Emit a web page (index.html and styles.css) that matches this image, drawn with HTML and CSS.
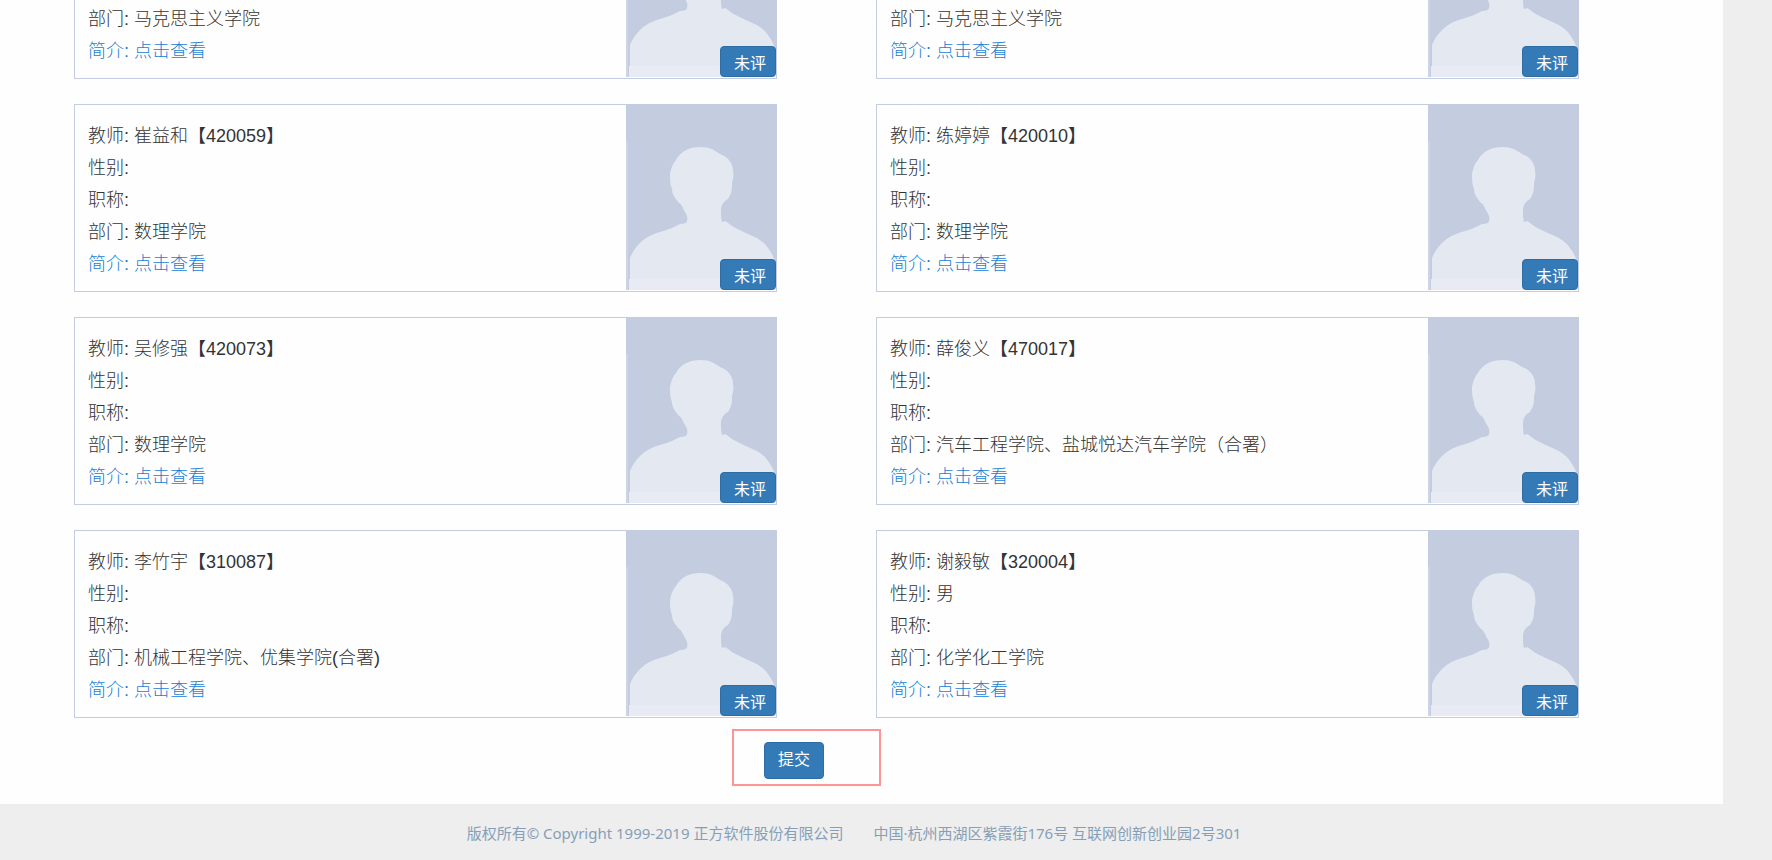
FILE: index.html
```html
<!DOCTYPE html>
<html lang="zh-CN">
<head>
<meta charset="utf-8">
<title>教师评价</title>
<link rel="stylesheet" href="styles.css">
</head>
<body>
<svg class="defs" aria-hidden="true">
  <symbol id="avatar" viewBox="0 0 150 185" preserveAspectRatio="none">
    <rect width="150" height="185" fill="#c4cce0"/>
    <path d="M0 36H2V185H0Z" fill="#cdd5e5"/>
    <path d="M4 185V153C6 148 9 143 14 138C20 132 27 129 34 127C42 125 48 122 54 119C58 119 61 118 61 116C62 113 61 110 59 107C57 104 56 99 53 98C50 94 46 90 46 84C44 79 44 75 44 69C45 63 47 58 50 55C55 46 63 42 75 42C84 42 88 45 94 49C102 52 107 58 107 66C108 71 107 74 106 78C106 84 106 88 102 94C98 96 95 100 95 105C95 110 95 114 96 117C99 116 100 116 102 118C108 123 116 126 122 129C132 133 138 137 142 143C145 147 148 152 149 157V185Z" fill="#e4e8f1"/>
    <path d="M3 174H150V185H3Z" fill="#e8ebf4"/>
  </symbol>
</svg>
<main class="page">
  <div class="cards">
    <article class="card">
      <div class="info"><p>部门: 马克思主义学院</p><a href="#">简介: 点击查看</a></div>
      <div class="photo"><svg class="avatar"><use href="#avatar"/></svg><button class="badge" type="button">未评</button></div>
    </article>
    <article class="card">
      <div class="info"><p>部门: 马克思主义学院</p><a href="#">简介: 点击查看</a></div>
      <div class="photo"><svg class="avatar"><use href="#avatar"/></svg><button class="badge" type="button">未评</button></div>
    </article>
    <article class="card">
      <div class="info"><p>教师: 崔益和<span class="code">【420059】</span></p><p>性别:</p><p>职称:</p><p>部门: 数理学院</p><a href="#">简介: 点击查看</a></div>
      <div class="photo"><svg class="avatar"><use href="#avatar"/></svg><button class="badge" type="button">未评</button></div>
    </article>
    <article class="card">
      <div class="info"><p>教师: 练婷婷<span class="code">【420010】</span></p><p>性别:</p><p>职称:</p><p>部门: 数理学院</p><a href="#">简介: 点击查看</a></div>
      <div class="photo"><svg class="avatar"><use href="#avatar"/></svg><button class="badge" type="button">未评</button></div>
    </article>
    <article class="card">
      <div class="info"><p>教师: 吴修强<span class="code">【420073】</span></p><p>性别:</p><p>职称:</p><p>部门: 数理学院</p><a href="#">简介: 点击查看</a></div>
      <div class="photo"><svg class="avatar"><use href="#avatar"/></svg><button class="badge" type="button">未评</button></div>
    </article>
    <article class="card">
      <div class="info"><p>教师: 薛俊义<span class="code">【470017】</span></p><p>性别:</p><p>职称:</p><p>部门: 汽车工程学院、盐城悦达汽车学院（合署）</p><a href="#">简介: 点击查看</a></div>
      <div class="photo"><svg class="avatar"><use href="#avatar"/></svg><button class="badge" type="button">未评</button></div>
    </article>
    <article class="card">
      <div class="info"><p>教师: 李竹宇<span class="code">【310087】</span></p><p>性别:</p><p>职称:</p><p>部门: 机械工程学院、优集学院(合署)</p><a href="#">简介: 点击查看</a></div>
      <div class="photo"><svg class="avatar"><use href="#avatar"/></svg><button class="badge" type="button">未评</button></div>
    </article>
    <article class="card">
      <div class="info"><p>教师: 谢毅敏<span class="code">【320004】</span></p><p>性别: 男</p><p>职称:</p><p>部门: 化学化工学院</p><a href="#">简介: 点击查看</a></div>
      <div class="photo"><svg class="avatar"><use href="#avatar"/></svg><button class="badge" type="button">未评</button></div>
    </article>
  </div>
  <div class="actions">
    <div class="highlight"><button class="submit" type="button">提交</button></div>
  </div>
</main>
<footer class="footer">
  <span>版权所有© Copyright 1999-2019 正方软件股份有限公司</span>
  <span>中国·杭州西湖区紫霞街176号 互联网创新创业园2号301</span>
</footer>
</body>
</html>
```
FILE: styles.css
```css
* {
  box-sizing: border-box;
}

/* The list is anchored to its end, so the first row runs off the top. */
body {
  display: flex;
  flex-direction: column;
  justify-content: flex-end;
  height: 100vh;
  margin: 0;
  overflow: hidden;
  background: #eee;
  color: #333;
  font-family: "Liberation Sans", "Noto Sans CJK SC", sans-serif;
}

.defs {
  position: absolute;
  width: 0;
  height: 0;
}

.page {
  flex: none;
  margin-right: 49px;
  padding: 0 144px 18px 74px;
  background: #fefefe;
}

.cards {
  display: grid;
  grid-template-columns: 1fr 1fr;
  gap: 25px 99px;
}

.card {
  display: flex;
  min-height: 188px;
  border: 1px solid #c4cce0;
}

.info {
  display: flex;
  flex: 1;
  flex-direction: column;
  justify-content: flex-end;
  align-items: flex-start;
  padding: 15px 13px 11px;
  font-size: 18px;
  font-weight: 300;
  line-height: 32px;
}

.info p {
  margin: 0;
}

.info a {
  color: #1a7fd4;
  text-decoration: none;
}

.code {
  font-weight: 400;
}

.photo {
  position: relative;
  width: 150px;
  padding-bottom: 1px;
}

.avatar {
  display: block;
  width: 100%;
  height: 100%;
}

.badge,
.submit {
  border: 1px solid #2e6da4;
  border-radius: 4px;
  background: #337ab7;
  color: #fff;
  font-family: inherit;
  font-size: 16px;
  line-height: 24px;
}

.badge {
  position: absolute;
  right: 0;
  bottom: 1px;
  padding: 5px 9px 0 13px;
}

.actions {
  display: flex;
  justify-content: center;
  margin-top: 11px;
  padding-right: 40px;
}

.highlight {
  width: 149px;
  padding: 11px 30px 5px;
  border: 2px solid #ff9494;
}

.submit {
  display: block;
  padding: 5px 13px 6px;
}

.footer {
  display: flex;
  flex: none;
  justify-content: center;
  gap: 30px;
  padding: 17px 64px 15px 0;
  color: #869fb7;
  font-family: "Noto Sans", "Noto Sans CJK SC", sans-serif;
  font-size: 15px;
  line-height: 24px;
}
```
